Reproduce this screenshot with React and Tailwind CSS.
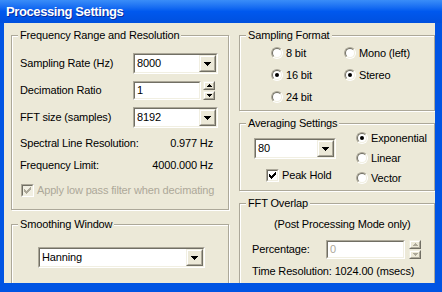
import React from 'react';

const DownArrow = ({ color = '#000' }) => (
  <svg width="7" height="4" viewBox="0 0 7 4" shapeRendering="crispEdges">
    <path d="M0 0h7v1H0z M1 1h5v1H1z M2 2h3v1H2z M3 3h1v1H3z" fill={color} />
  </svg>
);

const SmallArrow = ({ up, color = '#000' }) => (
  <svg width="5" height="3" viewBox="0 0 5 3" shapeRendering="crispEdges">
    {up ? (
      <path d="M0 2h5v1H0z M1 1h3v1H1z M2 0h1v1H2z" fill={color} />
    ) : (
      <path d="M0 0h5v1H0z M1 1h3v1H1z M2 2h1v1H2z" fill={color} />
    )}
  </svg>
);

const Raised = ({ className = '', children }) => (
  <div className={`border border-t-[#F1EFE2] border-l-[#F1EFE2] border-b-[#716F64] border-r-[#716F64] bg-[#ECE9D8] ${className}`}>
    <div className="h-full border border-t-white border-l-white border-b-[#ACA899] border-r-[#ACA899] flex items-center justify-center">
      {children}
    </div>
  </div>
);

const Sunken = ({ className = '', children }) => (
  <div className={`border border-t-[#ACA899] border-l-[#ACA899] border-b-white border-r-white ${className}`}>
    <div className="h-full border border-t-[#716F64] border-l-[#716F64] border-b-[#F1EFE2] border-r-[#F1EFE2] bg-white">
      {children}
    </div>
  </div>
);

const Combo = ({ value, className = '' }) => (
  <Sunken className={`h-[21px] ${className}`}>
    <div className="flex h-full">
      <span className="flex-1 pl-[2px] flex items-center">{value}</span>
      <Raised className="w-[17px] h-full">
        <DownArrow />
      </Raised>
    </div>
  </Sunken>
);

const Spinner = ({ disabled }) => {
  const c = disabled ? '#ACA899' : '#000';
  return (
    <div className="flex flex-col gap-[1px] w-[12px] h-[19px]">
      <Raised className="h-[9px]"><SmallArrow up color={c} /></Raised>
      <Raised className="h-[9px]"><SmallArrow color={c} /></Raised>
    </div>
  );
};

const Radio = ({ label, checked }) => (
  <div className="flex items-center gap-[3px]">
    <div className="w-[12px] h-[12px] rounded-full border border-t-[#ACA899] border-l-[#ACA899] border-b-white border-r-white">
      <div className="h-full rounded-full border border-t-[#716F64] border-l-[#716F64] border-b-[#F1EFE2] border-r-[#F1EFE2] bg-white flex items-center justify-center">
        {checked && <div className="w-[4px] h-[4px] rounded-full bg-black" />}
      </div>
    </div>
    <span>{label}</span>
  </div>
);

const Check = ({ label, disabled }) => (
  <div className={`flex items-center gap-[3px] ${disabled ? 'text-[#ACA899]' : ''}`}>
    <div className="w-[13px] h-[13px] border border-t-[#ACA899] border-l-[#ACA899] border-b-white border-r-white">
      <div className={`h-full border border-t-[#716F64] border-l-[#716F64] border-b-[#F1EFE2] border-r-[#F1EFE2] flex items-center justify-center ${disabled ? 'bg-[#F1EFE2]' : 'bg-white'}`}>
        <svg width="7" height="7" viewBox="0 0 7 7" shapeRendering="crispEdges">
          <path d="M6 0h1v3H6z M5 1h1v3H5z M4 2h1v3H4z M3 3h1v3H3z M2 4h1v3H2z M1 3h1v3H1z M0 2h1v3H0z" fill={disabled ? '#ACA899' : '#000'} />
        </svg>
      </div>
    </div>
    <span>{label}</span>
  </div>
);

const Group = ({ title, className = '', children }) => (
  <fieldset className={`border border-[#ACA899] shadow-[inset_1px_1px_0_#fff,1px_1px_0_#fff] pl-[6px] pr-[6px] min-w-0 ${className}`}>
    <legend className="px-[2px] bg-[#ECE9D8] leading-[13px]">{title}</legend>
    {children}
  </fieldset>
);

export default function App() {
  return (
    <div className="w-[442px] h-[292px] bg-[#0054E3] flex flex-col overflow-hidden font-['Liberation_Sans',Arial,sans-serif] text-[11px] leading-[13px] tracking-[-0.15px] text-black">
      <div className="h-[23px] shrink-0 flex items-center pl-[6px] pb-[1px] bg-gradient-to-b from-[#3A8DF8] via-[#0058EE] to-[#0050DE]">
        <span className="text-white font-bold text-[13px] leading-[15px] tracking-[-0.4px] [text-shadow:1px_1px_0_#0A2A9A]">Processing Settings</span>
      </div>
      <div className="flex h-[260px] shrink-0 ml-[4px] mr-[7px] bg-[#ECE9D8] overflow-hidden pl-[7px] gap-[10px] pt-[6px]">
        <div className="w-[218px] flex flex-col shrink-0">
          <Group title="Frequency Range and Resolution" className="h-[181px] shrink-0">
            <div className="flex items-center mt-[11px]">
              <span className="w-[115px] pl-[2px]">Sampling Rate (Hz)</span>
              <Combo value="8000" className="w-[85px]" />
            </div>
            <div className="flex items-center mt-[7px]">
              <span className="w-[115px] pl-[2px]">Decimation Ratio</span>
              <Sunken className="w-[68px] h-[19px]">
                <span className="pl-[2px] flex items-center h-full">1</span>
              </Sunken>
              <div className="ml-[2px]"><Spinner /></div>
            </div>
            <div className="flex items-center mt-[7px]">
              <span className="w-[115px] pl-[2px]">FFT size (samples)</span>
              <Combo value="8192" className="w-[85px]" />
            </div>
            <div className="flex justify-between w-[195px] pl-[2px] mt-[9px]">
              <span>Spectral Line Resolution:</span>
              <span>0.977 Hz</span>
            </div>
            <div className="flex justify-between w-[195px] pl-[2px] mt-[9px]">
              <span>Frequency Limit:</span>
              <span>4000.000 Hz</span>
            </div>
            <div className="mt-[12px] ml-[3px]">
              <Check label="Apply low pass filter when decimating" disabled />
            </div>
          </Group>
          <Group title="Smoothing Window" className="h-[100px] shrink-0 mt-[8px]">
            <Combo value="Hanning" className="w-[167px] ml-[20px] mt-[16px]" />
          </Group>
        </div>
        <div className="w-[196px] flex flex-col shrink-0">
          <Group title="Sampling Format" className="h-[82px] shrink-0">
            <div className="grid grid-cols-[73px_auto] pl-[25px] auto-rows-[22px] items-center">
              <Radio label="8 bit" />
              <Radio label="Mono (left)" />
              <Radio label="16 bit" checked />
              <Radio label="Stereo" checked />
              <Radio label="24 bit" />
            </div>
          </Group>
          <Group title="Averaging Settings" className="h-[74px] shrink-0 mt-[6px]">
            <div className="flex">
              <div className="ml-[8px] w-[82px] flex flex-col">
                <Combo value="80" className="w-[82px] mt-[8px]" />
                <div className="mt-[10px] ml-[12px]">
                  <Check label="Peak Hold" />
                </div>
              </div>
              <div className="ml-[20px] -mt-[2px] flex flex-col">
                <div className="h-[20px] flex items-center"><Radio label="Exponential" checked /></div>
                <div className="h-[20px] flex items-center"><Radio label="Linear" /></div>
                <div className="h-[20px] flex items-center"><Radio label="Vector" /></div>
              </div>
            </div>
          </Group>
          <Group title="FFT Overlap" className="h-[120px] shrink-0 mt-[6px]">
            <div className="mt-[8px] ml-[28px]">(Post Processing Mode only)</div>
            <div className="flex items-center mt-[9px] ml-[6px]">
              <span className="w-[74px]">Percentage:</span>
              <Sunken className="w-[79px] h-[19px]">
                <span className="pl-[2px] flex items-center h-full text-[#ACA899]">0</span>
              </Sunken>
              <div className="ml-[4px]"><Spinner disabled /></div>
            </div>
            <div className="mt-[6px] ml-[6px]">Time Resolution: 1024.00 (msecs)</div>
          </Group>
        </div>
      </div>
    </div>
  );
}
